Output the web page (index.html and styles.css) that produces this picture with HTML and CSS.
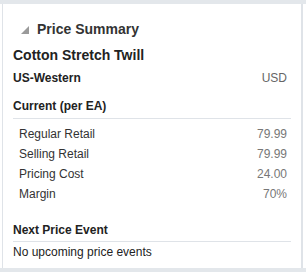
FILE: index.html
```html
<!DOCTYPE html>
<html>
<head>
<meta charset="utf-8">
<link rel="stylesheet" href="styles.css">
</head>
<body>
<div class="band"></div>
<div class="panel">
  <div class="title">
    <svg class="twisty" width="8" height="8" viewBox="0 0 8 8"><polygon points="8,0 8,8 0,8" fill="#9a9a9a"/></svg>
    <span>Price Summary</span>
  </div>
  <div class="item">Cotton Stretch Twill</div>
  <div class="zone"><span class="zone-name">US-Western</span><span class="currency">USD</span></div>
  <div class="section-head">Current (per EA)</div>
  <div class="rows">
    <div class="row"><span>Regular Retail</span><span class="val">79.99</span></div>
    <div class="row"><span>Selling Retail</span><span class="val">79.99</span></div>
    <div class="row"><span>Pricing Cost</span><span class="val">24.00</span></div>
    <div class="row"><span>Margin</span><span class="val">70%</span></div>
  </div>
  <div class="section-head next">Next Price Event</div>
  <div class="empty">No upcoming price events</div>
</div>
<div class="band"></div>
</body>
</html>
```
FILE: styles.css
```css
html, body {
  margin: 0;
  padding: 0;
}
body {
  width: 306px;
  height: 272px;
  overflow: hidden;
  background: #ffffff;
  font-family: "Liberation Sans", Arial, sans-serif;
  color: #333333;
}
.band {
  height: 4px;
  background: #e3e7eb;
}
.panel {
  box-sizing: border-box;
  margin-left: 2px;
  width: 301px;
  height: 264px;
  border-left: 1px solid #dfe3e8;
  border-right: 2px solid #dfe3e8;
  padding: 16px 10px 0 10px;
}
.title {
  display: flex;
  align-items: center;
  height: 18px;
  font-size: 14px;
  font-weight: bold;
  line-height: 18px;
  color: #333333;
}
.twisty {
  margin-left: 8px;
  margin-right: 8px;
  margin-top: 1px;
}
.item {
  margin-top: 8px;
  font-size: 14px;
  font-weight: bold;
  line-height: 18px;
  color: #222222;
}
.zone {
  margin-top: 6px;
  display: flex;
  justify-content: space-between;
  font-size: 12px;
  line-height: 16px;
  padding-right: 4px;
}
.zone-name {
  font-weight: bold;
  color: #222222;
}
.currency {
  color: #666666;
}
.section-head {
  margin-top: 12px;
  font-size: 12px;
  font-weight: bold;
  line-height: 16px;
  color: #222222;
  padding-bottom: 4px;
  border-bottom: 1px solid #dfe3e8;
}
.rows {
  padding: 5px 4px 0 6px;
}
.row {
  display: flex;
  justify-content: space-between;
  font-size: 12px;
  line-height: 20px;
  color: #333333;
}
.val {
  color: #777777;
}
.section-head.next {
  margin-top: 18px;
  padding-bottom: 3px;
}
.empty {
  margin-top: 2px;
  font-size: 12px;
  line-height: 16px;
  color: #222222;
}
```
